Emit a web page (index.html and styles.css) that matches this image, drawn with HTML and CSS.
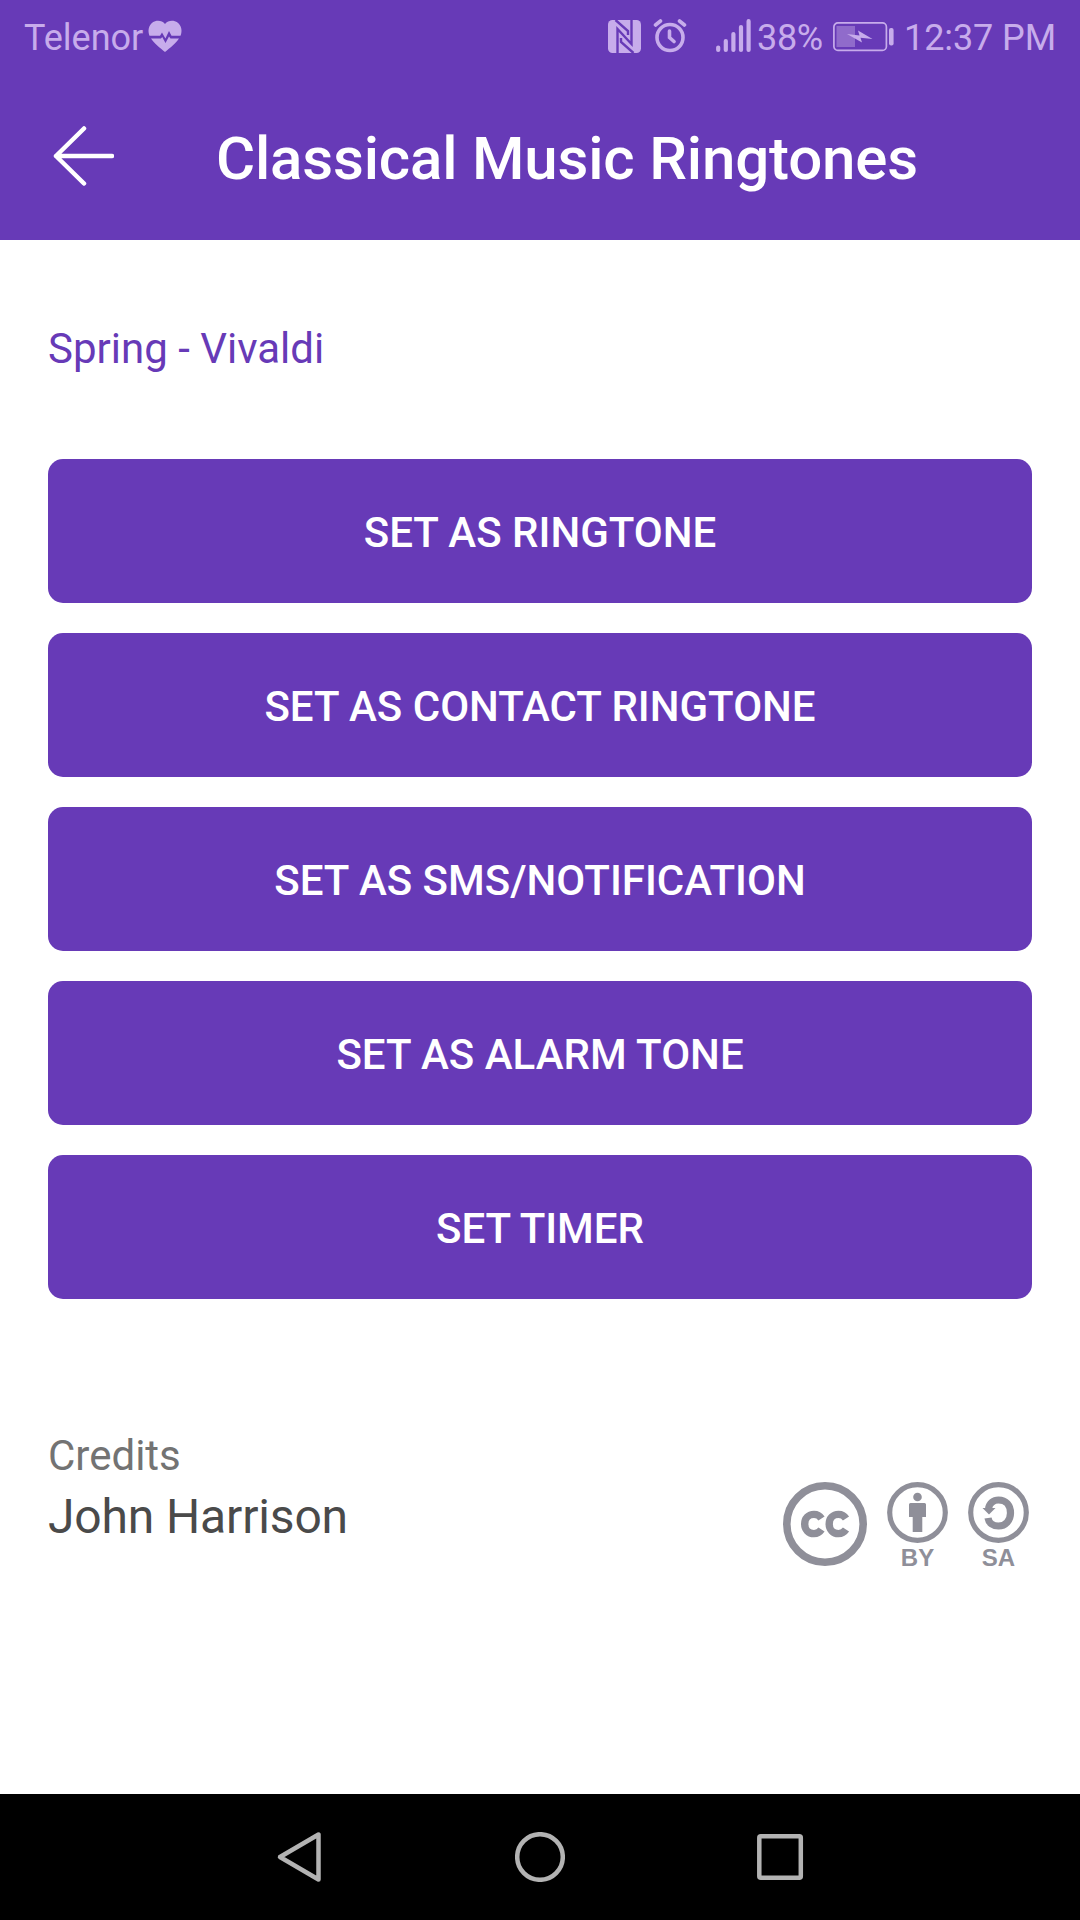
FILE: index.html
```html
<!DOCTYPE html>
<html lang="en">
<head>
<meta charset="utf-8">
<title>Classical Music Ringtones</title>
<link rel="stylesheet" href="styles.css">
</head>
<body>
<div class="screen">
  <header class="header">
    <div class="status">
      <span class="carrier">Telenor</span>
      <svg class="heart" width="36" height="34" viewBox="0 0 36 34">
        <path class="fill" d="M18 4C15 0 9 0 5.500 2.500C1.500 5.500 0.500 11 2.500 15.700H13L15 12.500L18.400 18.500L22 11L24.500 15.700H33.500C35.500 11 34.500 5.500 30.500 2.500C27 0 21 0 18 4Z"/>
        <path class="fill" d="M4 18.500H14L15.200 17L18.500 23L22 16.500L23.500 18.500H32C29 23 23 28 18 32C13 28 7 23 4 18.500Z"/>
      </svg>
      <svg class="nfc" width="33" height="33" viewBox="0 0 33 33">
        <rect class="fill" width="33" height="33" rx="4.500"/>
        <path class="cut" d="M9.500 33V9L23.500 24V0M7.500 0L20 11V15M13 18V22L25.500 33"/>
      </svg>
      <svg class="alarm" width="34" height="34" viewBox="0 0 34 34">
        <circle class="line" cx="17" cy="18.500" r="13" stroke-width="3.600"/>
        <path class="line" d="M16.500 12V18.500L21 22.500M2.500 6L7.500 2M26.500 2L31.500 6" stroke-width="3.600"/>
      </svg>
      <svg class="signal" width="35" height="34" viewBox="0 0 35 34">
        <path class="line" d="M2.200 28.500V31M9.800 22V31M17.400 15V31M25 8V31M32.600 2.200V31" stroke-width="4.200"/>
      </svg>
      <span class="percent">38%</span>
      <svg class="battery" width="61" height="30" viewBox="0 0 61 30">
        <rect class="line" x="0.900" y="0.900" width="52.500" height="27.500" rx="4" stroke-width="1.700"/>
        <rect class="charge" x="3.500" y="4" width="18.500" height="21"/>
        <path class="fill" d="M14 12L26.500 13.500L25 8.500L39.500 17L27.500 15.700L29 20.500Z"/>
        <rect class="fill" x="56" y="6" width="4.600" height="17.500" rx="2"/>
      </svg>
      <span class="clock">12:37 PM</span>
    </div>
    <div class="toolbar">
      <svg class="back" width="62" height="62" viewBox="0 0 62 62">
        <path d="M32 3.500L4 31L32 58.500M4 31H60" fill="none" stroke="#fff" stroke-width="4.500" stroke-linecap="round" stroke-linejoin="round"/>
      </svg>
      <h1 class="title">Classical Music Ringtones</h1>
    </div>
  </header>
  <main class="content">
    <h2 class="song">Spring - Vivaldi</h2>
    <div class="actions">
      <button class="action">SET AS RINGTONE</button>
      <button class="action">SET AS CONTACT RINGTONE</button>
      <button class="action">SET AS SMS/NOTIFICATION</button>
      <button class="action">SET AS ALARM TONE</button>
      <button class="action">SET TIMER</button>
    </div>
    <section class="credits">
      <div>
        <p class="label">Credits</p>
        <p class="author">John Harrison</p>
      </div>
      <div class="license">
        <svg width="84" height="84" viewBox="0 0 84 84">
          <circle class="ring" cx="42" cy="42" r="38.200" stroke-width="7.600"/>
          <path class="ring" d="M38.500 36.500C36.500 33.500 34 32.400 31 32.400C25.500 32.400 21.700 36.500 21.700 42C21.700 47.500 25.500 51.600 31 51.600C34 51.600 36.500 50.500 38.500 47.500M63 36.500C61 33.500 58.500 32.400 55.500 32.400C50 32.400 46.200 36.500 46.200 42C46.200 47.500 50 51.600 55.500 51.600C58.500 51.600 61 50.500 63 47.500" stroke-width="7.400"/>
        </svg>
        <div class="badge">
          <svg width="61" height="61" viewBox="0 0 61 61">
            <circle class="ring" cx="30.500" cy="30.500" r="27.800" stroke-width="5.200"/>
            <circle class="solid" cx="30.500" cy="15" r="4.300"/>
            <path class="solid" d="M23.500 21H37.500Q39 21 39 22.500V35H35.300V50H25.700V35H22V22.500Q22 21 23.500 21Z"/>
          </svg>
          <span class="code">BY</span>
        </div>
        <div class="badge">
          <svg width="61" height="61" viewBox="0 0 61 61">
            <circle class="ring" cx="30.500" cy="30.500" r="27.800" stroke-width="5.200"/>
            <path class="ring" d="M20.500 26.500C21.500 21 25.500 18 30.500 18C38 18 42.500 23.500 42.500 31C42.500 38.500 37.500 44 30.500 44C25 44 20.800 41 20 36" stroke-width="7.200"/>
            <path class="solid" d="M14.500 26H27.500L21 32.500Z"/>
          </svg>
          <span class="code">SA</span>
        </div>
      </div>
    </section>
  </main>
  <nav class="navbar">
    <svg width="50" height="52" viewBox="0 0 50 52"><path class="key" d="M43.500 3.500V48.500L5 26Z"/></svg>
    <svg width="50" height="50" viewBox="0 0 50 50"><circle class="key" cx="25" cy="25" r="22.800"/></svg>
    <svg width="50" height="50" viewBox="0 0 50 50"><rect class="key" x="4.300" y="4.300" width="41.500" height="41.500" rx="1.500"/></svg>
  </nav>
</div>
</body>
</html>
```
FILE: styles.css
```css
* { box-sizing: border-box; }
body { margin: 0; font-family: Roboto, "Liberation Sans", sans-serif; }
h1, h2, p { margin: 0; font-weight: 400; }
svg { display: block; flex: none; }

.screen { width: 1080px; height: 1920px; display: flex; flex-direction: column; background: #fff; }

.header { height: 240px; background: #673ab7; color: #fff; }
.status { height: 72px; display: flex; align-items: center; padding: 0 24px; color: #c7aceb; font-size: 36px; line-height: 42px; white-space: nowrap; }
.status span { padding-top: 4px; }
.fill { fill: #c7aceb; }
.line { fill: none; stroke: #c7aceb; stroke-linecap: round; }
.cut { fill: none; stroke: #673ab7; stroke-width: 2.400px; }
.charge { fill: #906bcb; }
.carrier { width: 123px; }
.heart { margin-top: 2px; }
.nfc { margin-left: 425px; margin-top: 1px; }
.alarm { margin-left: 12px; }
.signal { margin-left: 29px; }
.percent { width: 76px; margin-left: 6px; letter-spacing: -0.3px; }
.battery { margin-top: 1px; }
.clock { margin-left: auto; letter-spacing: -0.1px; }

.toolbar { height: 168px; display: flex; align-items: center; padding: 0 0 0 52px; }
.title { margin-left: 102px; padding-top: 5px; font-size: 60px; line-height: 70px; font-weight: 500; letter-spacing: -0.17px; white-space: nowrap; }

.content { flex: 1; padding: 84px 48px 0; }
.song { font-size: 42px; line-height: 50px; color: #673ab7; }
.actions { display: flex; flex-direction: column; gap: 30px; margin-top: 85px; }
.action { height: 144px; border: 0; border-radius: 15px; padding: 2px 0 0; background: #673ab7; color: #fff; font-family: inherit; font-size: 42px; font-weight: 500; }

.credits { display: flex; justify-content: space-between; align-items: flex-start; margin-top: 132px; }
.label { font-size: 42px; line-height: 50px; color: #737373; }
.author { font-size: 48px; line-height: 56px; margin-top: 8px; letter-spacing: -0.15px; color: #4a4a4a; }
.license { display: flex; align-items: flex-start; gap: 20px; margin: 51px 3px 0 0; color: #8f8f99; }
.ring { fill: none; stroke: #8f8f99; }
.solid { fill: #8f8f99; }
.badge { display: flex; flex-direction: column; align-items: center; }
.code { margin-top: 1px; font: bold 24px/28px "Liberation Sans", sans-serif; }

.navbar { height: 126px; display: flex; align-items: center; justify-content: center; gap: 190px; background: #000; }
.key { fill: none; stroke: #b3b3b3; stroke-width: 4.500px; stroke-linejoin: round; }
```
